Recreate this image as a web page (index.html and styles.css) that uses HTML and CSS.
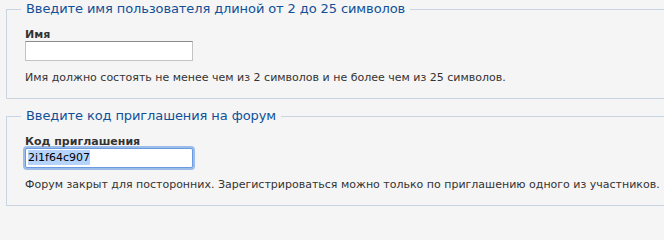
FILE: index.html
```html
<!DOCTYPE html>
<html>
<head>
<meta charset="utf-8">
<link rel="stylesheet" href="styles.css">
</head>
<body>
<div class="page">
  <fieldset class="box">
    <legend class="box-title">Введите имя пользователя длиной от 2 до 25 символов</legend>
    <label class="field-label" for="name">Имя</label>
    <input class="field-input" id="name" type="text">
    <p class="hint">Имя должно состоять не менее чем из 2 символов и не более чем из 25 символов.</p>
  </fieldset>
  <fieldset class="box">
    <legend class="box-title">Введите код приглашения на форум</legend>
    <label class="field-label">Код приглашения</label>
    <div class="field-input field-focused"><span class="selected">2i1f64c907</span></div>
    <p class="hint">Форум закрыт для посторонних. Зарегистрироваться можно только по приглашению одного из участников.</p>
  </fieldset>
</div>
</body>
</html>
```

FILE: styles.css
```css
html, body {
  margin: 0;
  padding: 0;
  background: #f5f5f5;
}
body {
  font-family: "DejaVu Sans", Verdana, sans-serif;
  color: #333;
}
.page {
  width: 664px;
  height: 212px;
  overflow: hidden;
  box-sizing: border-box;
  padding: 1px 0 0 6px;
}
.box {
  margin: 0 -30px 9px 0;
  padding: 0 0 13px 18px;
  border: 1px solid #c9d5e1;
  min-width: 0;
}
.box-title {
  margin-left: -4px;
  padding: 0 5px;
  font-size: 13px;
  line-height: 16px;
  letter-spacing: -0.1px;
  color: #115098;
}
.field-label {
  display: block;
  margin-top: 12px;
  font-size: 11px;
  font-weight: bold;
  line-height: 12px;
  color: #333;
}
.field-input {
  display: block;
  box-sizing: border-box;
  width: 168px;
  height: 20px;
  margin: 0;
  padding: 0 2px;
  background: #fff;
  border: 1px solid #c3c3c3;
  border-top-color: #8c8c8c;
  font-family: "DejaVu Sans", Verdana, sans-serif;
  font-size: 11px;
  line-height: 18px;
  color: #000;
  outline: none;
}
.field-focused {
  border-color: #6a9be0;
  box-shadow: 0 0 0 2px #9cbde9;
  border-radius: 2px;
}
.selected {
  background: #b5d3fb;
  padding: 1px 0;
}
.hint {
  margin: 10px 0 0 0;
  font-size: 11px;
  line-height: 14px;
}
```
